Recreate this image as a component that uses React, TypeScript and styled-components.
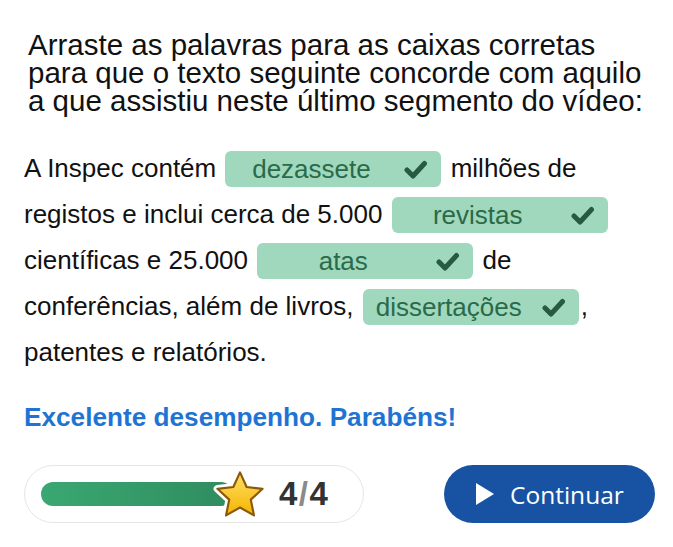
import React from 'react';
import styled, { createGlobalStyle } from 'styled-components';

const GlobalStyle = createGlobalStyle`
  html, body {
    margin: 0;
    padding: 0;
    background: #ffffff;
  }
  body {
    font-family: 'Liberation Sans', Arial, sans-serif;
    color: #111111;
  }
`;

const Page = styled.div`
  box-sizing: border-box;
  width: 673px;
  padding: 31px 18px 0 24px;
`;

const Title = styled.h1`
  margin: 0;
  padding-left: 4px;
  font-size: 29.5px;
  font-weight: 400;
  line-height: 28px;
  color: #111111;
`;

const Passage = styled.p`
  margin: 30px 0 0;
  font-size: 26px;
  line-height: 46px;
`;

const Chip = styled.span`
  display: inline-flex;
  align-items: center;
  box-sizing: border-box;
  width: 216px;
  height: 36px;
  margin: 0 2px;
  padding: 0 14px 0 0;
  vertical-align: middle;
  border-radius: 6px;
  background: #9fd8bc;
  color: #2b6a49;
  position: relative;
  top: -1px;
`;

const ChipLabel = styled.span`
  flex: 1;
  text-align: center;
  line-height: 1;
`;

const CheckIcon = styled.svg`
  width: 23px;
  height: 19px;
  margin-left: 7px;
  flex: none;
`;

const Feedback = styled.div`
  margin-top: 27px;
  font-size: 26.2px;
  line-height: 30px;
  font-weight: 700;
  color: #1f74d3;
`;

const Footer = styled.div`
  display: flex;
  align-items: center;
  justify-content: space-between;
  margin-top: 33px;
`;

const ScorePill = styled.div`
  box-sizing: border-box;
  display: flex;
  align-items: center;
  width: 340px;
  height: 58px;
  padding: 0 16px;
  border: 1px solid #e6e6e6;
  border-radius: 29px;
`;

const Bar = styled.div`
  width: 192px;
  height: 24px;
  border-radius: 12px;
  background: linear-gradient(90deg, #3aa873 0%, #2f8c5e 100%);
`;

const StarIcon = styled.svg`
  width: 58px;
  height: 54px;
  margin-left: -22px;
  flex: none;
`;

const Score = styled.div`
  margin-left: 10px;
  font-size: 33px;
  font-weight: 700;
  color: #333333;
  letter-spacing: 0.5px;
`;

const Slash = styled.span`
  color: #8a8a8a;
  margin: 0 1px;
`;

const ContinueButton = styled.button`
  display: flex;
  align-items: center;
  gap: 16px;
  box-sizing: border-box;
  width: 211px;
  height: 58px;
  padding: 0 0 0 32px;
  border: none;
  border-radius: 29px;
  background: #1753a2;
  color: #ffffff;
  font-family: 'Open Sans', 'Liberation Sans', sans-serif;
  font-size: 24.5px;
  cursor: pointer;
`;

const PlayIcon = styled.svg`
  width: 18px;
  height: 22px;
  flex: none;
`;

const answers = ['dezassete', 'revistas', 'atas', 'dissertações'];

const Check = () => (
  <CheckIcon viewBox="0 0 23 19">
    <polyline
      points="3,10 9,16 20.5,3.5"
      fill="none"
      stroke="#275a41"
      strokeWidth="5"
      strokeLinejoin="round"
      strokeLinecap="round"
    />
  </CheckIcon>
);

const Blank = ({ word }: { word: string }) => (
  <Chip>
    <ChipLabel>{word}</ChipLabel>
    <Check />
  </Chip>
);

const Star = () => (
  <StarIcon viewBox="0 0 52 50">
    <defs>
      <linearGradient id="starFill" x1="0" y1="0" x2="0" y2="1">
        <stop offset="0" stopColor="#ffe066" />
        <stop offset="1" stopColor="#f5b400" />
      </linearGradient>
    </defs>
    <polygon
      points="26,5 32.17,18.51 46.92,20.2 35.99,30.24 38.94,44.8 26,37.5 13.06,44.8 16.01,30.24 5.08,20.2 19.83,18.51"
      fill="#ffffff"
      stroke="#ffffff"
      strokeWidth="7"
      strokeLinejoin="round"
    />
    <polygon
      points="26,5 32.17,18.51 46.92,20.2 35.99,30.24 38.94,44.8 26,37.5 13.06,44.8 16.01,30.24 5.08,20.2 19.83,18.51"
      fill="url(#starFill)"
      stroke="#8a5a0a"
      strokeWidth="2"
      strokeLinejoin="round"
    />
  </StarIcon>
);

export default function App() {
  return (
    <>
      <GlobalStyle />
      <Page>
        <Title>
          Arraste as palavras para as caixas corretas para que o texto seguinte concorde com aquilo a
          que assistiu neste último segmento do vídeo:
        </Title>
        <Passage>
          A Inspec contém <Blank word={answers[0]} /> milhões de registos e inclui cerca de 5.000{' '}
          <Blank word={answers[1]} /> científicas e 25.000 <Blank word={answers[2]} /> de
          conferências, além de livros, <Blank word={answers[3]} />, patentes e relatórios.
        </Passage>
        <Feedback>Excelente desempenho. Parabéns!</Feedback>
        <Footer>
          <ScorePill>
            <Bar />
            <Star />
            <Score>
              4<Slash>/</Slash>4
            </Score>
          </ScorePill>
          <ContinueButton>
            <PlayIcon viewBox="0 0 18 22">
              <polygon points="0,0 18,11 0,22" fill="#ffffff" />
            </PlayIcon>
            Continuar
          </ContinueButton>
        </Footer>
      </Page>
    </>
  );
}
